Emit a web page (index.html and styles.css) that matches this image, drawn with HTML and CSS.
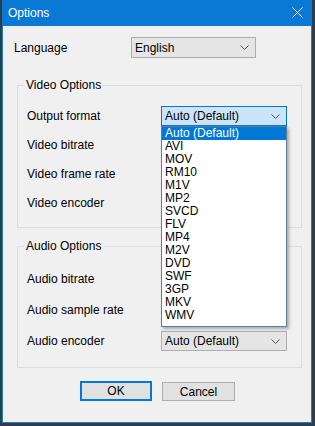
FILE: index.html
```html
<!DOCTYPE html>
<html lang="en">
<head>
    <meta charset="UTF-8">
    <meta name="viewport" content="width=device-width, initial-scale=1.0">
    <title>Options</title>
    <link rel="stylesheet" href="styles.css">
</head>
<body>
    <div class="window">
        <div class="title-bar">
            <span class="title">Options</span>
            <svg class="close" width="11" height="11" viewBox="0 0 11 11">
                <path d="M0.5 0.5 L10.5 10.5 M10.5 0.5 L0.5 10.5" stroke="#fff" stroke-width="1" fill="none"/>
            </svg>
        </div>

        <div class="content">
            <div class="row lang-row">
                <span class="label lang-label">Language</span>
                <div class="combo lang-combo">
                    <span>English</span>
                    <svg class="chevron" width="9" height="5" viewBox="0 0 9 5"><path d="M0.5 0.5 L4.5 4.5 L8.5 0.5" stroke="#555" fill="none"/></svg>
                </div>
            </div>

            <fieldset class="group video-group">
                <legend>Video Options</legend>
                <div class="row">
                    <span class="label">Output format</span>
                    <div class="combo focused">
                        <span>Auto (Default)</span>
                        <svg class="chevron" width="9" height="5" viewBox="0 0 9 5"><path d="M0.5 0.5 L4.5 4.5 L8.5 0.5" stroke="#555" fill="none"/></svg>
                        <ul class="dropdown">
                            <li class="selected">Auto (Default)</li>
                            <li>AVI</li>
                            <li>MOV</li>
                            <li>RM10</li>
                            <li>M1V</li>
                            <li>MP2</li>
                            <li>SVCD</li>
                            <li>FLV</li>
                            <li>MP4</li>
                            <li>M2V</li>
                            <li>DVD</li>
                            <li>SWF</li>
                            <li>3GP</li>
                            <li>MKV</li>
                            <li>WMV</li>
                        </ul>
                    </div>
                </div>
                <!-- these combos sit under the open list -->
                <div class="row">
                    <span class="label">Video bitrate</span>
                    <div class="combo"></div>
                </div>
                <div class="row">
                    <span class="label">Video frame rate</span>
                    <div class="combo"></div>
                </div>
                <div class="row">
                    <span class="label">Video encoder</span>
                    <div class="combo"></div>
                </div>
            </fieldset>

            <fieldset class="group audio-group">
                <legend>Audio Options</legend>
                <div class="row">
                    <span class="label">Audio bitrate</span>
                    <div class="combo"></div>
                </div>
                <div class="row">
                    <span class="label">Audio sample rate</span>
                    <div class="combo"></div>
                </div>
                <div class="row">
                    <span class="label">Audio encoder</span>
                    <div class="combo">
                        <span>Auto (Default)</span>
                        <svg class="chevron" width="9" height="5" viewBox="0 0 9 5"><path d="M0.5 0.5 L4.5 4.5 L8.5 0.5" stroke="#555" fill="none"/></svg>
                    </div>
                </div>
            </fieldset>

            <div class="buttons">
                <button class="btn default">OK</button>
                <button class="btn cancel">Cancel</button>
            </div>
        </div>
    </div>
</body>
</html>
```

FILE: styles.css
```css
* {
    margin: 0;
    padding: 0;
    box-sizing: border-box;
}

body {
    font-family: 'Liberation Sans', Arial, sans-serif;
    font-size: 12px;
    color: #000;
    background-color: #2e3d4c;
    overflow: hidden;
}

.window {
    width: 310px;
    height: 423px;
    margin-left: 2px;
    background-color: #f0f0f0;
    border: 1px solid #1c7fd2;
    border-top: none;
    display: flex;
    flex-direction: column;
}

.title-bar {
    height: 26px;
    margin: 0 -1px;
    background-color: #0a78d5;
    color: #fff;
    display: flex;
    align-items: center;
    justify-content: space-between;
    padding: 0 9px 1px 6px;
    flex-shrink: 0;
}

.title {
    font-size: 12px;
    line-height: 14px;
}

.close {
    display: block;
}

.content {
    padding: 0 9px 0 11px;
    display: flex;
    flex-direction: column;
}

.row {
    display: flex;
    align-items: center;
    height: 20px;
}

.label {
    width: 134px;
    flex-shrink: 0;
    line-height: 14px;
}

.lang-row {
    margin-top: 11px;
    height: 21px;
}

.lang-label {
    width: 117px;
}

.combo {
    position: relative;
    width: 126px;
    height: 20px;
    background-color: #e5e5e5;
    border: 1px solid #adadad;
    padding: 0 3px;
    display: flex;
    align-items: center;
    justify-content: space-between;
    line-height: 14px;
}

.lang-combo {
    width: 125px;
    height: 21px;
}

.combo.focused {
    background-color: #cce4f7;
    border-color: #0078d7;
}

.chevron {
    display: block;
    margin-right: 3px;
}

.group {
    border: 1px solid #dcdcdc;
    margin-left: 3px;
    padding: 14px 9px 14px 9px;
    display: flex;
    flex-direction: column;
    gap: 9px;
    min-width: 0;
}

.group legend {
    line-height: 14px;
    padding: 0 2px;
    margin-left: -3px;
}

.video-group {
    margin-top: 20px;
}

.audio-group {
    margin-top: 11px;
    padding-top: 16px;
    padding-bottom: 16px;
    gap: 11px;
}

.dropdown {
    position: absolute;
    top: 19px;
    left: -1px;
    width: 126px;
    list-style: none;
    background-color: #fff;
    border: 1px solid #5f7f98;
    padding-bottom: 4px;
    box-shadow: 2px 2px 3px rgba(0, 0, 0, 0.3);
    z-index: 2;
}

.dropdown li {
    height: 13px;
    line-height: 13px;
    padding-left: 3px;
    white-space: nowrap;
}

.dropdown li.selected {
    background-color: #0078d7;
    color: #fff;
}

.buttons {
    display: flex;
    justify-content: center;
    gap: 10px;
    margin-top: 13px;
    padding-right: 1px;
}

.btn {
    font-family: inherit;
    font-size: 12px;
    height: 20px;
    width: 72px;
    background-color: #e1e1e1;
    border: 1px solid #adadad;
    color: #000;
}

.btn.default {
    border: 2px solid #0078d7;
}

.btn.cancel {
    width: 73px;
    height: 19px;
    margin-top: 1px;
}
```
